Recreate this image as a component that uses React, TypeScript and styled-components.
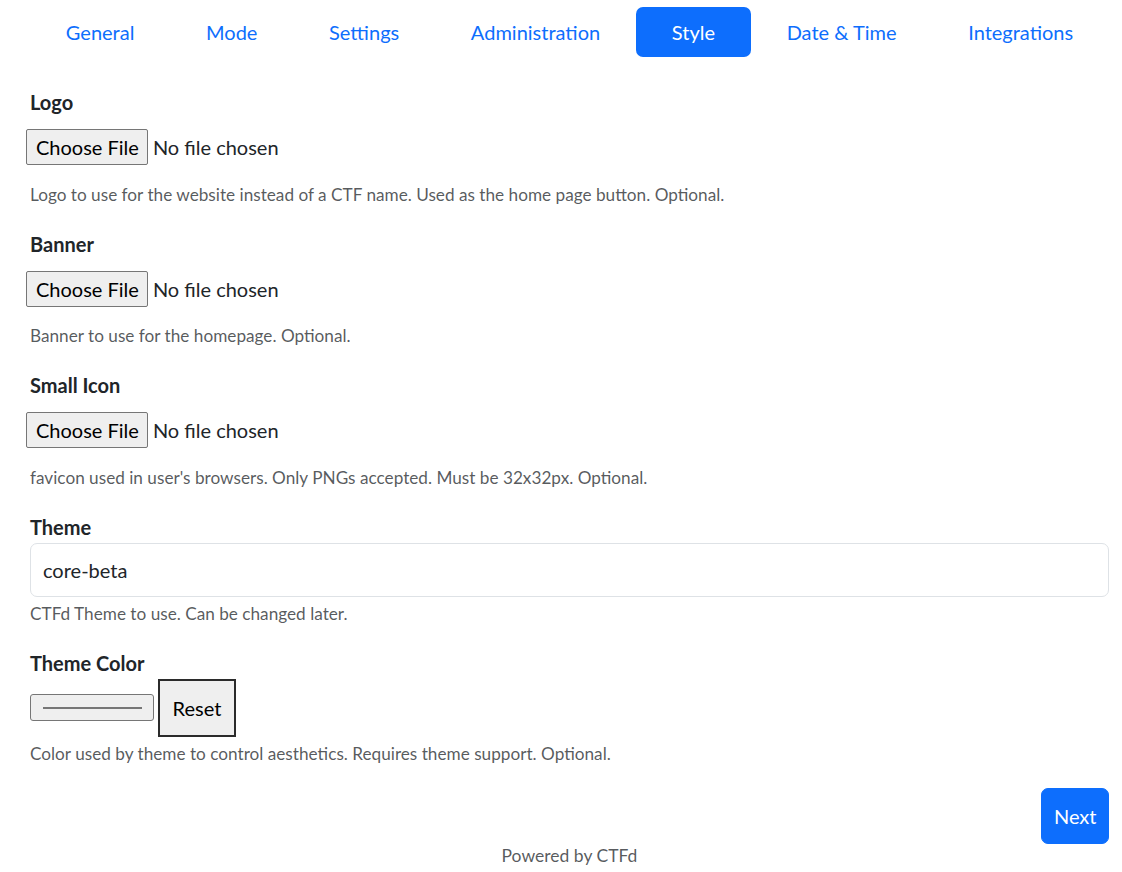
import React from "react";
import styled, { createGlobalStyle } from "styled-components";

const GlobalStyle = createGlobalStyle`
  html, body { margin: 0; padding: 0; background: #fff; }
  body {
    font-family: Lato, "Noto Sans", "Liberation Sans", sans-serif;
    font-size: 20px;
    line-height: 1.5;
    color: #212529;
  }
  * { box-sizing: border-box; }
`;

const Page = styled.div`
  padding: 7px 13px 0 30px;
`;

const Nav = styled.nav`
  display: flex;
  margin-bottom: 30px;
`;

const NavItem = styled.a<{ $active?: boolean }>`
  flex: 1 1 auto;
  text-align: center;
  padding: 10px 16px;
  font-size: 20px;
  line-height: 30px;
  border-radius: 7px;
  text-decoration: none;
  cursor: pointer;
  color: ${(p) => (p.$active ? "#fff" : "#0d6efd")};
  background: ${(p) => (p.$active ? "#0d6efd" : "transparent")};
`;

const Section = styled.div`
  display: flex;
  flex-direction: column;
  align-items: flex-start;
  margin-bottom: 21px;
`;

const Label = styled.label`
  font-weight: 700;
  font-size: 20px;
  line-height: 30px;
  margin-bottom: 1px;
`;

const FileInput = styled.input`
  font-family: Lato, "Noto Sans", "Liberation Sans", sans-serif;
  font-size: 20px;
  line-height: 24px;
  color: #212529;
  margin: 11px 0 12.5px -4px;
  padding: 0;
  &::file-selector-button {
    font-family: inherit;
    font-size: 20px;
    line-height: 24px;
    color: #000;
    background: #efefef;
    border: 1px solid #767676;
    border-radius: 2px;
    padding: 5px 8px 5px 9px;
    margin-right: 5px;
  }
`;

const Help = styled.small`
  display: block;
  font-size: 17.2px;
  line-height: 26px;
  margin-top: 4px;
  color: rgba(33, 37, 41, 0.75);
`;

const TextInput = styled.input`
  width: 100%;
  font-family: inherit;
  font-size: 20px;
  line-height: 30px;
  color: #212529;
  padding: 11px 12px;
  border: 1px solid #dee2e6;
  border-radius: 7px;
  background: #fff;
  outline: none;
`;

const ColorRow = styled.div`
  display: flex;
  align-items: center;
  gap: 4px;
`;

const ColorSwatch = styled.div`
  width: 124px;
  height: 27px;
  border: 1px solid #767676;
  border-radius: 3px;
  background: #efefef;
  display: flex;
  align-items: center;
  justify-content: center;
`;

const SwatchLine = styled.div`
  width: 99px;
  height: 2px;
  background: #767676;
`;

const ResetButton = styled.button`
  font-family: inherit;
  font-size: 20px;
  line-height: 30px;
  color: #000;
  background: #efefef;
  border: 2px solid #2b2b2b;
  border-radius: 0;
  padding: 12px 12px;
  width: 78px;
  height: 58px;
`;

const Actions = styled.div`
  display: flex;
  justify-content: flex-end;
`;

const PrimaryButton = styled.button`
  font-family: inherit;
  font-size: 20px;
  line-height: 30px;
  color: #fff;
  background: #0d6efd;
  border: 1px solid #0d6efd;
  border-radius: 7px;
  padding: 12px 11.5px;
`;

const Footer = styled.footer`
  text-align: center;
  font-size: 17.5px;
  line-height: 26px;
  color: rgba(33, 37, 41, 0.75);
  margin-top: -1px;
`;

const tabs = ["General", "Mode", "Settings", "Administration", "Style", "Date & Time", "Integrations"];

const files = [
  { label: "Logo", help: "Logo to use for the website instead of a CTF name. Used as the home page button. Optional." },
  { label: "Banner", help: "Banner to use for the homepage. Optional." },
  { label: "Small Icon", help: "favicon used in user's browsers. Only PNGs accepted. Must be 32x32px. Optional." },
];

export default function App() {
  return (
    <>
      <GlobalStyle />
      <Page>
        <Nav>
          {tabs.map((t) => (
            <NavItem key={t} $active={t === "Style"}>
              {t}
            </NavItem>
          ))}
        </Nav>
        {files.map((f) => (
          <Section key={f.label}>
            <Label>{f.label}</Label>
            <FileInput type="file" />
            <Help>{f.help}</Help>
          </Section>
        ))}
        <Section>
          <Label>Theme</Label>
          <TextInput defaultValue="core-beta" />
          <Help>CTFd Theme to use. Can be changed later.</Help>
        </Section>
        <Section>
          <Label>Theme Color</Label>
          <ColorRow>
            <ColorSwatch>
              <SwatchLine />
            </ColorSwatch>
            <ResetButton type="button">Reset</ResetButton>
          </ColorRow>
          <Help>Color used by theme to control aesthetics. Requires theme support. Optional.</Help>
        </Section>
        <Actions>
          <PrimaryButton type="button">Next</PrimaryButton>
        </Actions>
        <Footer>Powered by CTFd</Footer>
      </Page>
    </>
  );
}
